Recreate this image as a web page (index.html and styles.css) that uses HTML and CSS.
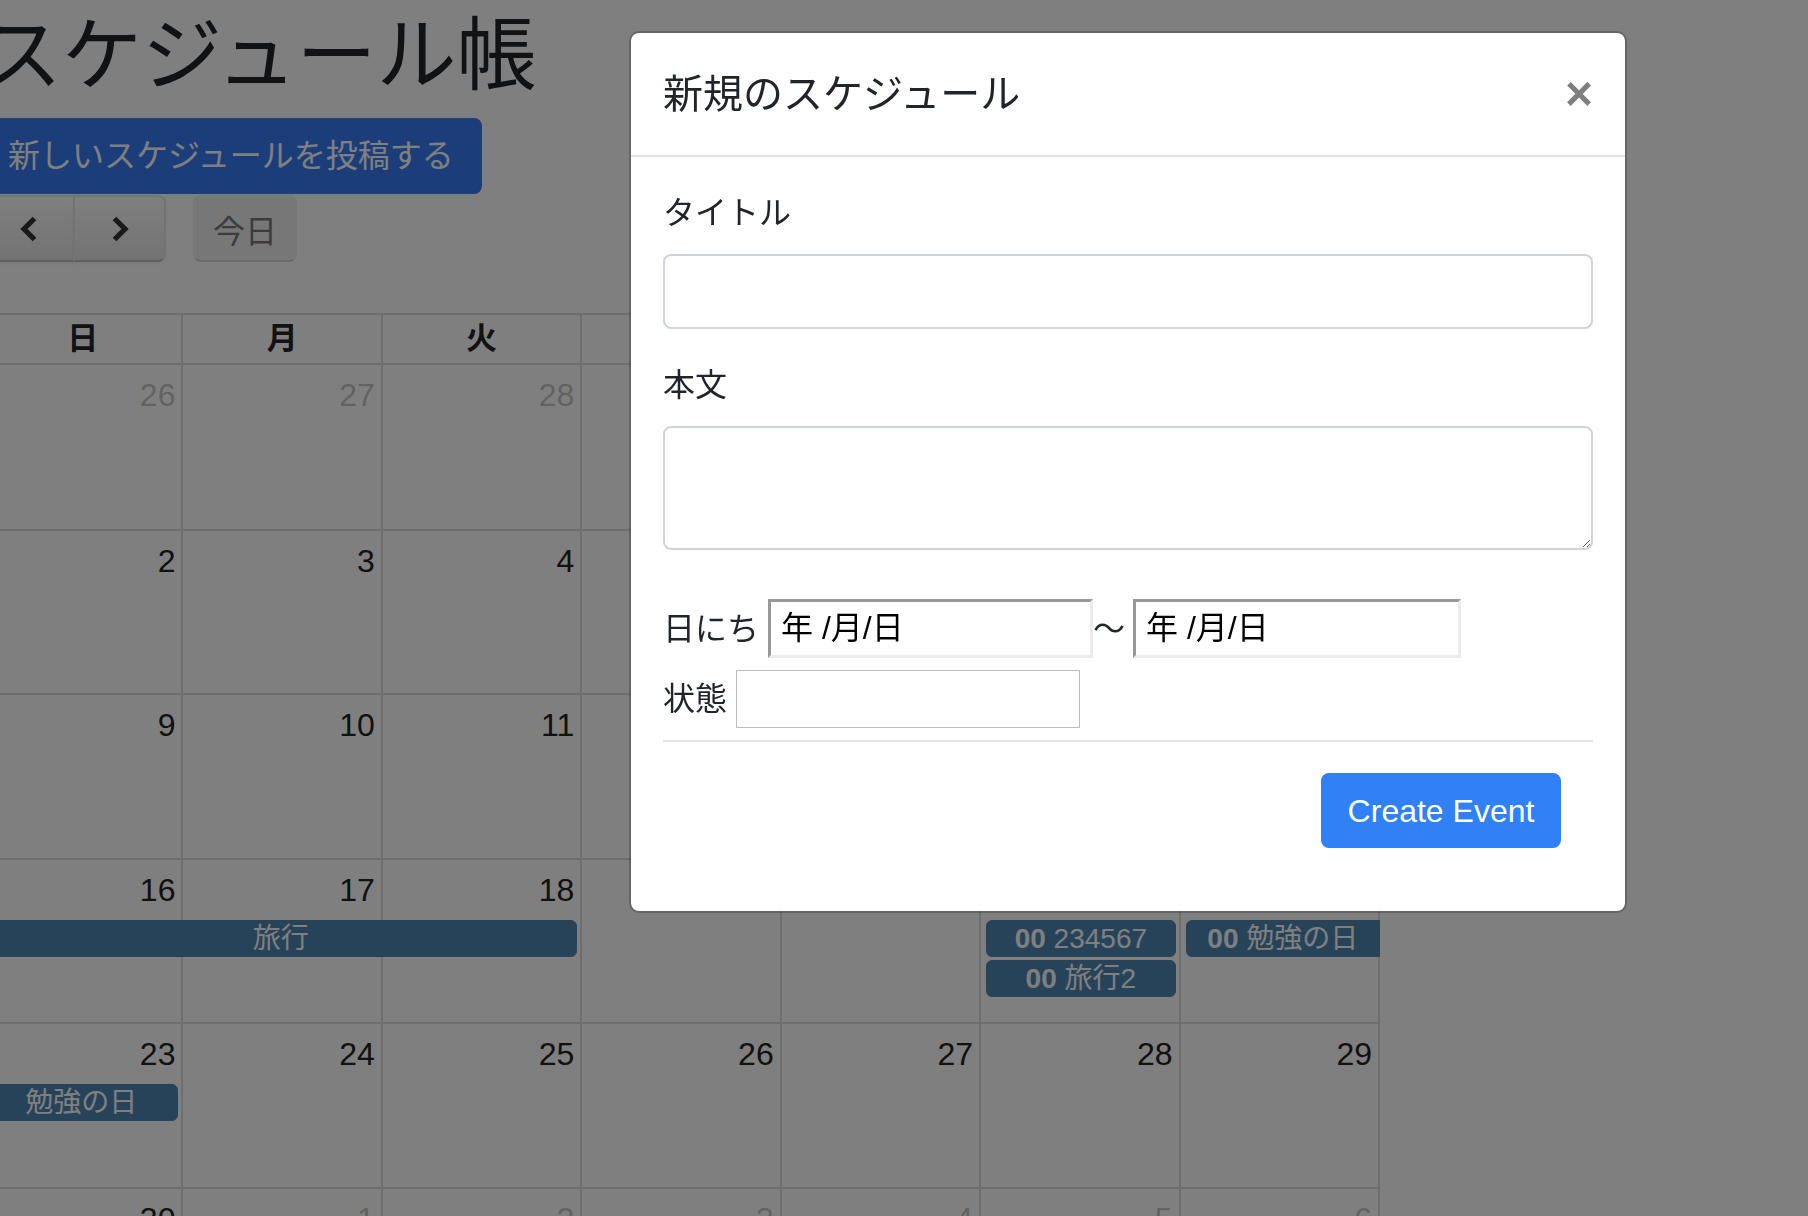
FILE: index.html
```html
<!DOCTYPE html>
<html lang="ja">
<head>
<meta charset="utf-8">
<title>スケジュール帳</title>
<link rel="stylesheet" href="styles.css">
</head>
<body>
<div class="page">
  <h1 class="app-title">スケジュール帳</h1>
  <button class="btn-new">新しいスケジュールを投稿する</button>
  <div class="fc-toolbar">
    <div class="fc-btn-group">
      <button class="fc-btn fc-prev" aria-label="prev"><svg class="chev" viewBox="0 0 20 28" width="20" height="28"><path d="M15.5 3.5 L5 14 L15.5 24.5"/></svg></button>
      <button class="fc-btn fc-next" aria-label="next"><svg class="chev" viewBox="0 0 20 28" width="20" height="28"><path d="M4.5 3.5 L15 14 L4.5 24.5"/></svg></button>
    </div>
    <button class="fc-btn fc-today" disabled>今日</button>
  </div>

  <div class="cal">
    <div class="cal-head">
      <div class="dow">日</div><div class="dow">月</div><div class="dow">火</div><div class="dow">水</div><div class="dow">木</div><div class="dow">金</div><div class="dow">土</div>
    </div>

    <div class="week week-first">
      <div class="day other">26</div><div class="day other">27</div><div class="day other">28</div><div class="day other">29</div><div class="day other">30</div><div class="day other">31</div><div class="day">1</div>
    </div>
    <div class="week">
      <div class="day">2</div><div class="day">3</div><div class="day">4</div><div class="day">5</div><div class="day">6</div><div class="day">7</div><div class="day">8</div>
    </div>
    <div class="week">
      <div class="day">9</div><div class="day">10</div><div class="day">11</div><div class="day">12</div><div class="day">13</div><div class="day">14</div><div class="day">15</div>
    </div>
    <div class="week">
      <div class="day">16</div><div class="day">17</div><div class="day">18</div><div class="day">19</div><div class="day">20</div><div class="day">21</div><div class="day">22</div>
      <div class="ev ev-trip cont-left">旅行</div>
      <div class="ev ev-fri-a"><b>00</b> 234567</div>
      <div class="ev ev-fri-b"><b>00</b> 旅行2</div>
      <div class="ev ev-sat cont-right"><b>00</b> 勉強の日</div>
    </div>
    <div class="week">
      <div class="day">23</div><div class="day">24</div><div class="day">25</div><div class="day">26</div><div class="day">27</div><div class="day">28</div><div class="day">29</div>
      <div class="ev ev-sun cont-left">勉強の日</div>
    </div>
    <div class="week">
      <div class="day">30</div><div class="day other">1</div><div class="day other">2</div><div class="day other">3</div><div class="day other">4</div><div class="day other">5</div><div class="day other">6</div>
    </div>
  </div>
</div>

<div class="backdrop"></div>

<div class="modal">
  <div class="modal-header">
    <h5 class="modal-title">新規のスケジュール</h5>
    <button class="close" aria-label="Close">×</button>
  </div>
  <div class="modal-body">
    <div class="form-group">
      <label class="form-label">タイトル</label>
      <input class="form-control" type="text">
    </div>
    <div class="form-group">
      <label class="form-label">本文</label>
      <textarea class="form-control form-area" rows="2"></textarea>
    </div>
    <div class="date-row">
      <span class="inline-label">日にち</span>
      <div class="date-input">年 /月/日</div>
      <span class="tilde">〜</span>
      <div class="date-input date-input-end">年 /月/日</div>
    </div>
    <div class="status-row">
      <span class="inline-label">状態</span>
      <input class="status-input" type="text">
    </div>
    <hr class="sep">
    <div class="actions">
      <button class="btn-primary">Create Event</button>
    </div>
  </div>
</div>
</body>
</html>
```

FILE: styles.css
```css
* { box-sizing: border-box; }

html, body {
  margin: 0;
  padding: 0;
}

body {
  width: 1808px;
  height: 1216px;
  overflow: hidden;
  background: #fff;
  color: #212529;
  font-family: "Liberation Sans", "Noto Sans CJK JP", sans-serif;
  font-size: 32px;
  line-height: 1.5;
}

button, input, textarea {
  font-family: inherit;
}

.page {
  margin-left: -18px;
  width: 1398px;
  padding-top: 8px;
}

.app-title {
  margin: 0 0 14px;
  font-size: 80px;
  font-weight: 400;
  line-height: 96px;
  white-space: nowrap;
}

.btn-new {
  display: block;
  width: 500px;
  height: 76px;
  padding: 0 24px;
  border: 2px solid #367cf6;
  border-radius: 8px;
  background: #367cf6;
  color: #fff;
  font-size: 32px;
  line-height: 48px;
  text-align: left;
}

/* toolbar */
.fc-toolbar {
  display: flex;
  align-items: center;
  margin-top: 1px;
  height: 67px;
}

.fc-btn-group {
  display: flex;
}

.fc-btn {
  height: 67px;
  padding: 0 19px;
  border: 2px solid;
  border-color: #e6e6e6 #e6e6e6 #bfbfbf;
  background-color: #f5f5f5;
  background-image: linear-gradient(#ffffff, #e6e6e6);
  color: #333;
  font-size: 32px;
  box-shadow: inset 0 2px 0 rgba(255,255,255,.2), 0 2px 4px rgba(0,0,0,.05);
  display: flex;
  align-items: center;
  justify-content: center;
}

.fc-prev {
  width: 93px;
  border-radius: 8px 0 0 8px;
}

.fc-next {
  width: 93px;
  margin-left: -2px;
  border-radius: 0 8px 8px 0;
}

.chev path {
  fill: none;
  stroke: #333;
  stroke-width: 5.2;
  stroke-linejoin: miter;
  stroke-linecap: butt;
}

.fc-today {
  width: 104px;
  margin-left: 27px;
  border-radius: 8px;
  opacity: .65;
  background-image: none;
  background-color: #e6e6e6;
  box-shadow: none;
  padding: 0;
}

/* calendar */
.cal {
  width: 1398px;
  margin-top: 51px;
  border-top: 2px solid #ddd;
  border-left: 2px solid #ddd;
}

.cal-head {
  display: grid;
  grid-template-columns: repeat(7, 1fr);
}

.dow {
  height: 50px;
  border-right: 2px solid #ddd;
  border-bottom: 2px solid #ddd;
  text-align: center;
  font-weight: 700;
  font-size: 31px;
  line-height: 48px;
}

.week {
  display: grid;
  grid-template-columns: repeat(7, 1fr);
  grid-template-rows: 60px 40px 40px 1fr;
  height: 164.4px;
  border-bottom: 2px solid #ddd;
}

.week-first {
  height: 166px;
}

.day {
  grid-row: 1 / -1;
  border-right: 2px solid #ddd;
  text-align: right;
  padding: 11px 6px 0 0;
  font-size: 32px;
  line-height: 38px;
  color: #222;
}

.day:nth-child(1) { grid-column: 1; }
.day:nth-child(2) { grid-column: 2; }
.day:nth-child(3) { grid-column: 3; }
.day:nth-child(4) { grid-column: 4; }
.day:nth-child(5) { grid-column: 5; }
.day:nth-child(6) { grid-column: 6; }
.day:nth-child(7) { grid-column: 7; }

.day.other {
  color: rgba(51, 51, 51, .3);
}

.ev {
  height: 37px;
  margin: 0 5px 3px;
  border: 1px solid #4f87b5;
  border-radius: 6px;
  background: #4f87b5;
  color: #fff;
  font-size: 28px;
  line-height: 35px;
  text-align: center;
  white-space: nowrap;
  overflow: hidden;
}

.ev b { font-weight: 700; }

.cont-left {
  margin-left: 0;
  border-top-left-radius: 0;
  border-bottom-left-radius: 0;
}

.cont-right {
  margin-right: 0;
  border-top-right-radius: 0;
  border-bottom-right-radius: 0;
}

.ev-trip { grid-column: 1 / 4; grid-row: 2; }
.ev-fri-a { grid-column: 6; grid-row: 2; }
.ev-fri-b { grid-column: 6; grid-row: 3; }
.ev-sat { grid-column: 7; grid-row: 2; }
.ev-sun { grid-column: 1; grid-row: 2; }

/* backdrop + modal */
.backdrop {
  position: fixed;
  inset: 0;
  background: rgba(0, 0, 0, .5);
}

.modal {
  position: absolute;
  left: 629px;
  top: 31px;
  width: 998px;
  background: #fff;
  border: 2px solid rgba(0, 0, 0, .2);
  border-radius: 10px;
  background-clip: padding-box;
}

.modal-header {
  display: flex;
  align-items: center;
  justify-content: space-between;
  height: 124px;
  padding: 0 32px;
  border-bottom: 2px solid #dee2e6;
}

.modal-title {
  margin: 0;
  font-size: 40px;
  font-weight: 400;
  line-height: 60px;
}

.close {
  padding: 0;
  margin: 0;
  border: 0;
  background: transparent;
  font-size: 48px;
  font-weight: 700;
  line-height: 1;
  color: #000;
  opacity: .5;
  text-shadow: 0 2px 0 #fff;
}

.modal-body {
  padding: 32px 32px 32px;
}

.form-group {
  margin-bottom: 32px;
}

.form-label {
  display: block;
  margin-bottom: 17px;
  font-size: 32px;
  line-height: 48px;
}

.form-control {
  display: block;
  width: 100%;
  height: 75px;
  padding: 12px 24px;
  border: 2px solid #ced4da;
  border-radius: 8px;
  background: #fff;
  font-size: 32px;
  line-height: 48px;
  color: #495057;
}

.form-area {
  height: 124px;
  resize: vertical;
}

.date-row {
  display: flex;
  align-items: center;
  margin-top: 49px;
  height: 59px;
}

.inline-label {
  font-size: 32px;
  line-height: 48px;
  white-space: nowrap;
}

.date-input {
  width: 325px;
  height: 59px;
  margin-left: 9px;
  padding: 0 10px;
  border: 3px solid;
  border-color: #999 #ececec #ececec #999;
  background: #fff;
  color: #000;
  font-size: 32px;
  line-height: 53px;
  white-space: nowrap;
}

.date-input-end {
  width: 328px;
  margin-left: 8px;
}

.tilde {
  width: 32px;
  font-size: 32px;
  line-height: 48px;
  text-align: center;
}

.status-row {
  display: flex;
  align-items: center;
  margin-top: 12px;
  height: 58px;
}

.status-input {
  width: 344px;
  height: 58px;
  margin-left: 9px;
  border: 1px solid #bdbdbd;
  background: #fff;
  font-size: 32px;
}

.sep {
  margin: 12px 0 31px;
  border: 0;
  border-top: 2px solid #e2e5e8;
  height: 0;
}

.actions {
  display: flex;
  justify-content: flex-end;
  padding-right: 32px;
  margin-bottom: 31px;
}

.btn-primary {
  width: 240px;
  height: 75px;
  padding: 0;
  border: 2px solid #3080f6;
  border-radius: 8px;
  background: #3080f6;
  color: #fff;
  font-size: 32px;
  line-height: 48px;
}
```
